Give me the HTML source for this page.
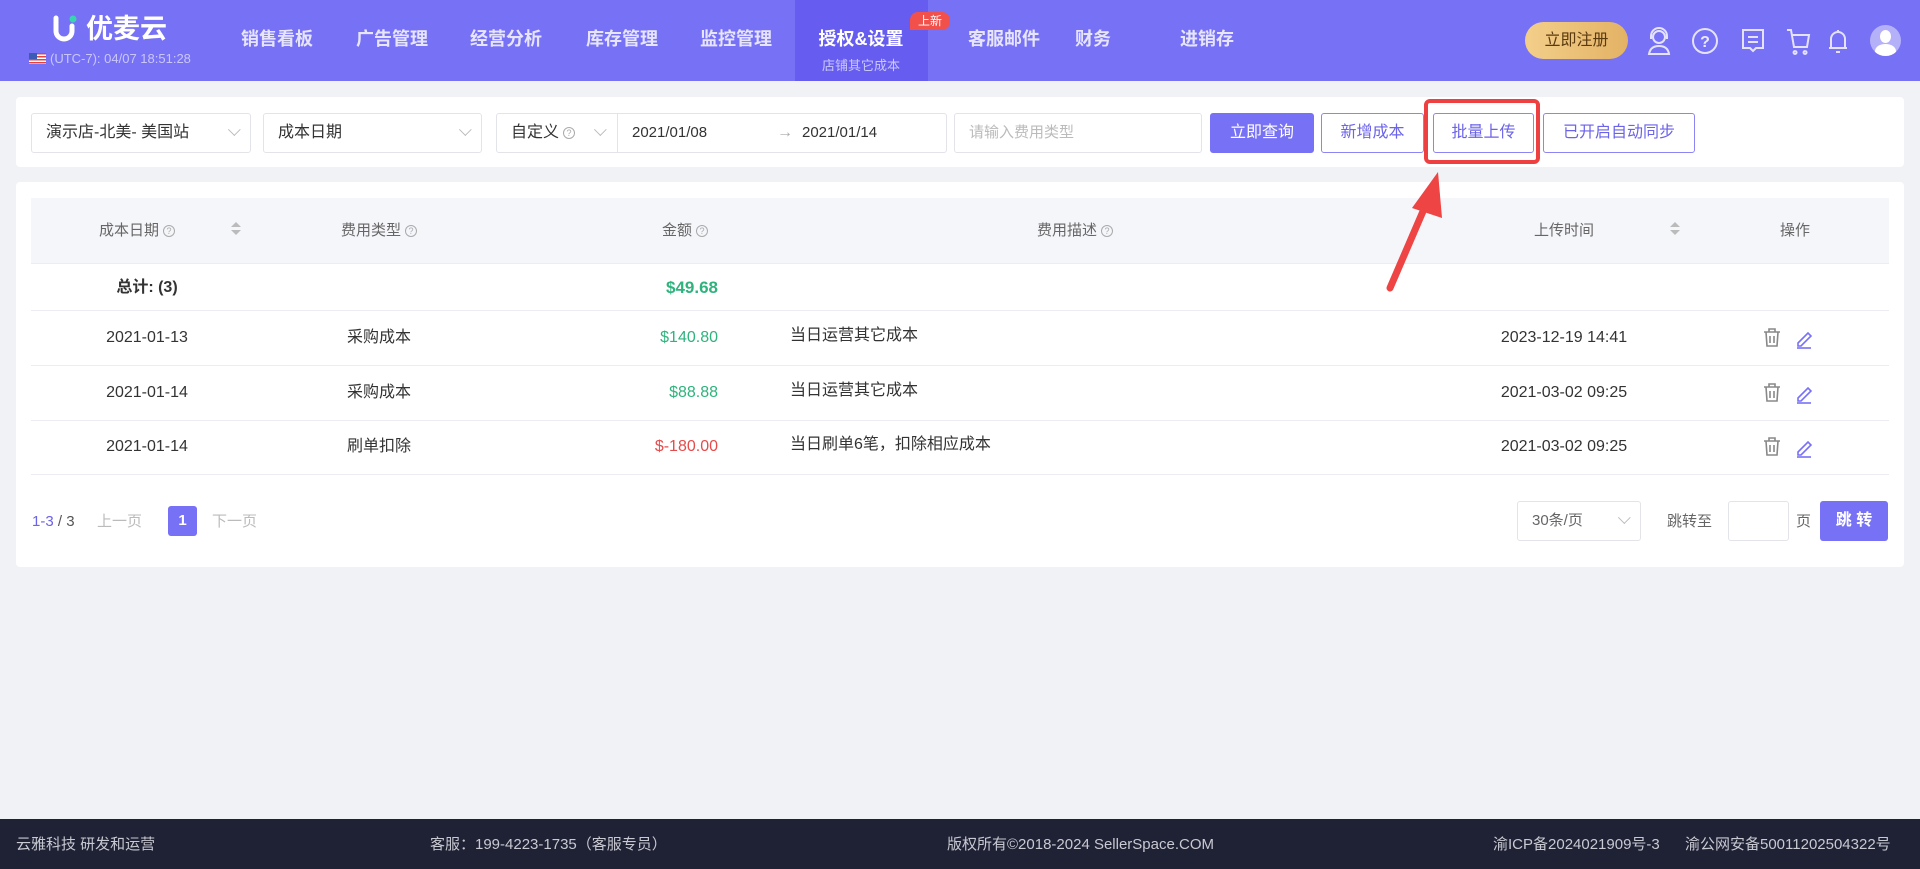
<!DOCTYPE html>
<html><head><meta charset="utf-8"><style>
*{margin:0;padding:0;box-sizing:border-box}
body{width:1920px;height:869px;background:#f0f2f5;font-family:"Liberation Sans","Noto Sans CJK SC",sans-serif;position:relative;overflow:hidden;color:#333}
.a{position:absolute;line-height:20px}
.hd{left:0;top:0;width:1920px;height:81px;background:#7771f5}
.nav{top:28px;font-size:18px;font-weight:bold;color:rgba(255,255,255,.82);transform:translateX(-50%);white-space:nowrap;line-height:22px}
.card{background:#fff;border-radius:4px}
.sel{border:1px solid #e2e4ea;border-radius:3px;height:40px;top:113px;font-size:16px;line-height:38px;padding-left:14px;color:#333;background:#fff}
.chev{position:absolute;right:14px;top:14px;width:9px;height:9px;border-right:1px solid #bbb;border-bottom:1px solid #bbb;transform:rotate(45deg) translateY(-4px)}
.btn{top:113px;height:40px;border:1px solid #8c85f3;border-radius:3px;color:#6b63e8;font-size:16px;line-height:38px;text-align:center;background:#fff}
.th{top:221px;font-size:15px;color:#666;white-space:nowrap}
.td{font-size:16px;color:#333;white-space:nowrap}
.c{transform:translateX(-50%)}
.r{transform:translateX(-100%)}
.line{left:31px;width:1858px;height:1px;background:#ebedf2}
.q{display:inline-block;width:12px;height:12px;border:1px solid #aaa;border-radius:50%;font-size:9px;line-height:10px;text-align:center;color:#aaa;vertical-align:1px;margin-left:4px}
.sort{width:10px}
.sort:before{content:"";position:absolute;left:0;top:0;border:5px solid transparent;border-bottom:5px solid #bbb;border-top:0}
.sort:after{content:"";position:absolute;left:0;top:8px;border:5px solid transparent;border-top:5px solid #bbb;border-bottom:0}
.ft{top:835px;font-size:15px;color:#c8c9d2;white-space:nowrap}
</style></head><body>
<div class="a hd"></div>
<div class="a" style="left:795px;top:0;width:133px;height:81px;background:#665df0"></div>
<svg class="a" style="left:52px;top:14px" width="30" height="30" viewBox="0 0 30 30"><path d="M4 4v13a8 8 0 0 0 16 0V12" stroke="#fff" stroke-width="5" fill="none" stroke-linecap="round"/><circle cx="21" cy="5" r="3.5" fill="#39d3b0"/></svg>
<div class="a" style="left:86px;top:13px;font-size:27px;color:#fff;font-weight:bold;line-height:32px">优麦云</div>
<div class="a" style="left:29px;top:53px;width:17px;height:11px;background:repeating-linear-gradient(#d44 0 1.5px,#fff 1.5px 3px)"><div style="width:8px;height:6px;background:#3b5bb5"></div></div>
<div class="a" style="left:50px;top:49px;font-size:13px;color:rgba(255,255,255,.6)">(UTC-7): 04/07 18:51:28</div>
<div class="a nav" style="left:277px">销售看板</div>
<div class="a nav" style="left:392px">广告管理</div>
<div class="a nav" style="left:506px">经营分析</div>
<div class="a nav" style="left:622px">库存管理</div>
<div class="a nav" style="left:736px">监控管理</div>
<div class="a nav" style="left:861px;color:#fff">授权&amp;设置</div>
<div class="a" style="left:861px;top:56px;font-size:13px;color:rgba(255,255,255,.65);transform:translateX(-50%);white-space:nowrap">店铺其它成本</div>
<div class="a" style="left:910px;top:12px;width:40px;height:18px;background:#f2504a;border-radius:8px 8px 8px 0;color:#fff;font-size:12px;line-height:18px;text-align:center">上新</div>
<div class="a nav" style="left:1004px">客服邮件</div>
<div class="a nav" style="left:1093px">财务</div>
<div class="a nav" style="left:1207px">进销存</div>
<div class="a" style="left:1525px;top:22px;width:103px;height:37px;border-radius:19px;background:linear-gradient(90deg,#f3cf8a,#e3b265);color:#5a3a10;font-size:16px;line-height:37px;text-align:center">立即注册</div>
<svg class="a" style="left:1645px;top:26px" width="260" height="30" viewBox="0 0 260 30" fill="none" stroke="rgba(255,255,255,.8)" stroke-width="2">
<circle cx="14" cy="11" r="6"/><path d="M6 13V10a8 8 0 0 1 16 0v3M4 28c1-6 5-8 10-8s9 2 10 8z"/>
<circle cx="60" cy="15" r="12"/><text x="60" y="21" font-size="16" fill="rgba(255,255,255,.85)" stroke="none" text-anchor="middle" font-family="Liberation Sans" font-weight="bold">?</text>
<path d="M98 4h20v18h-7l-3 3-3-3h-7z"/><path d="M103 11h10M103 16h10"/>
<path d="M142 4h4l3 17h13l2-12h-17M150 25a1.5 1.5 0 1 0 .1 0M160 25a1.5 1.5 0 1 0 .1 0"/>
<path d="M186 22V13a7 7 0 0 1 14 0v9h2H184zM191 26h4M193 4v2"/>
</svg>
<div class="a" style="left:1870px;top:25px;width:31px;height:31px;border-radius:50%;background:rgba(255,255,255,.45);overflow:hidden"><div style="position:absolute;left:10px;top:5px;width:11px;height:13px;border-radius:50%;background:#fff"></div><div style="position:absolute;left:5px;top:19px;width:21px;height:14px;border-radius:50% 50% 0 0;background:#fff"></div></div>

<div class="a card" style="left:16px;top:97px;width:1888px;height:70px"></div>
<div class="a sel" style="left:31px;width:220px">演示店-北美- 美国站<span class="chev"></span></div>
<div class="a sel" style="left:263px;width:219px">成本日期<span class="chev"></span></div>
<div class="a sel" style="left:496px;width:451px">自定义<span class="q">?</span><span class="chev" style="right:auto;left:96px"></span>
<span style="position:absolute;left:120px;top:-1px;width:1px;height:40px;background:#e2e4ea"></span>
<span style="position:absolute;left:135px;font-size:15px">2021/01/08</span>
<span style="position:absolute;left:280px;color:#aaa">→</span>
<span style="position:absolute;left:305px;font-size:15px">2021/01/14</span></div>
<div class="a sel" style="left:954px;width:248px;color:#bbb;font-size:15px">请输入费用类型</div>
<div class="a btn" style="left:1210px;width:104px;background:#7771f5;color:#fff;border-color:#7771f5">立即查询</div>
<div class="a btn" style="left:1321px;width:103px">新增成本</div>
<div class="a btn" style="left:1433px;width:101px">批量上传</div>
<div class="a btn" style="left:1543px;width:152px">已开启自动同步</div>
<div class="a" style="left:1424px;top:99px;width:116px;height:65px;border:4px solid #ee4040;border-radius:6px"></div>

<div class="a card" style="left:16px;top:182px;width:1888px;height:385px"></div>
<div class="a" style="left:31px;top:198px;width:1858px;height:65px;background:#f5f6fa"></div>
<div class="a th c" style="left:137px">成本日期<span class="q">?</span></div>
<div class="a sort" style="left:231px;top:222px"></div>
<div class="a th c" style="left:379px">费用类型<span class="q">?</span></div>
<div class="a th r" style="left:708px">金额<span class="q">?</span></div>
<div class="a th c" style="left:1075px">费用描述<span class="q">?</span></div>
<div class="a th c" style="left:1564px">上传时间</div>
<div class="a sort" style="left:1670px;top:222px"></div>
<div class="a th c" style="left:1795px">操作</div>
<div class="a line" style="top:263px"></div>
<div class="a td c" style="left:147px;top:278px;font-weight:bold">总计: (3)</div>
<div class="a td r" style="left:718px;top:278px;font-weight:bold;color:#2fb37d;font-size:17px">$49.68</div>
<div class="a line" style="top:310px"></div>
<div class="a line" style="top:365px"></div>
<div class="a line" style="top:420px"></div>
<div class="a line" style="top:474px"></div>

<div class="a td c" style="left:147px;top:328px">2021-01-13</div>
<div class="a td c" style="left:379px;top:328px">采购成本</div>
<div class="a td r" style="left:718px;top:328px;color:#2fb37d">$140.80</div>
<div class="a td" style="left:790px;top:326px">当日运营其它成本</div>
<div class="a td c" style="left:1564px;top:328px">2023-12-19 14:41</div>

<div class="a td c" style="left:147px;top:383px">2021-01-14</div>
<div class="a td c" style="left:379px;top:383px">采购成本</div>
<div class="a td r" style="left:718px;top:383px;color:#2fb37d">$88.88</div>
<div class="a td" style="left:790px;top:381px">当日运营其它成本</div>
<div class="a td c" style="left:1564px;top:383px">2021-03-02 09:25</div>

<div class="a td c" style="left:147px;top:437px">2021-01-14</div>
<div class="a td c" style="left:379px;top:437px">刷单扣除</div>
<div class="a td r" style="left:718px;top:437px;color:#e54b4b">$-180.00</div>
<div class="a td" style="left:790px;top:435px">当日刷单6笔，扣除相应成本</div>
<div class="a td c" style="left:1564px;top:437px">2021-03-02 09:25</div>

<svg class="a" style="left:1762px;top:328px" width="60" height="130" viewBox="0 0 60 130" fill="none" stroke-width="1.6">
<g id="ic"><path d="M2 4h16M7 4V1h6v3M4 4l1 14h10l1-14M8 8v7M12 8v7" stroke="#888"/><path d="M36 15l10-10 3 3-10 10h-3z" stroke="#7771f5"/><path d="M35 20h14" stroke="#7771f5"/></g>
<use href="#ic" y="55"/><use href="#ic" y="109"/>
</svg>

<div class="a" style="left:32px;top:512px;font-size:15px;color:#555"><span style="color:#6b63e8">1-3</span> / 3</div>
<div class="a" style="left:97px;top:512px;font-size:15px;color:#bbb">上一页</div>
<div class="a" style="left:168px;top:506px;width:29px;height:30px;background:#7771f5;border-radius:3px;color:#fff;font-size:15px;line-height:30px;text-align:center;font-weight:bold">1</div>
<div class="a" style="left:212px;top:512px;font-size:15px;color:#bbb">下一页</div>
<div class="a sel" style="left:1517px;top:501px;width:124px;font-size:15px;color:#666">30条/页<span class="chev"></span></div>
<div class="a" style="left:1667px;top:512px;font-size:15px;color:#666">跳转至</div>
<div class="a" style="left:1728px;top:501px;width:61px;height:40px;border:1px solid #e2e4ea;border-radius:3px;background:#fff"></div>
<div class="a" style="left:1796px;top:512px;font-size:15px;color:#666">页</div>
<div class="a" style="left:1820px;top:501px;width:68px;height:40px;background:#7771f5;border-radius:3px;color:#fff;font-size:16px;line-height:40px;text-align:center;font-weight:bold">跳 转</div>

<svg class="a" style="left:1370px;top:160px" width="90" height="140" viewBox="0 0 90 140"><path d="M20 128 L57 42" stroke="#ee4444" stroke-width="7" stroke-linecap="round"/><path d="M42 48 L68 12 L72 58 Z" fill="#ee4444"/></svg>

<div class="a" style="left:0;top:819px;width:1920px;height:50px;background:#1f2134"></div>
<div class="a ft" style="left:16px">云雅科技 研发和运营</div>
<div class="a ft" style="left:430px">客服：199-4223-1735（客服专员）</div>
<div class="a ft" style="left:947px">版权所有©2018-2024 SellerSpace.COM</div>
<div class="a ft" style="left:1493px">渝ICP备2024021909号-3</div>
<div class="a ft" style="left:1685px">渝公网安备50011202504322号</div>
</body></html>
